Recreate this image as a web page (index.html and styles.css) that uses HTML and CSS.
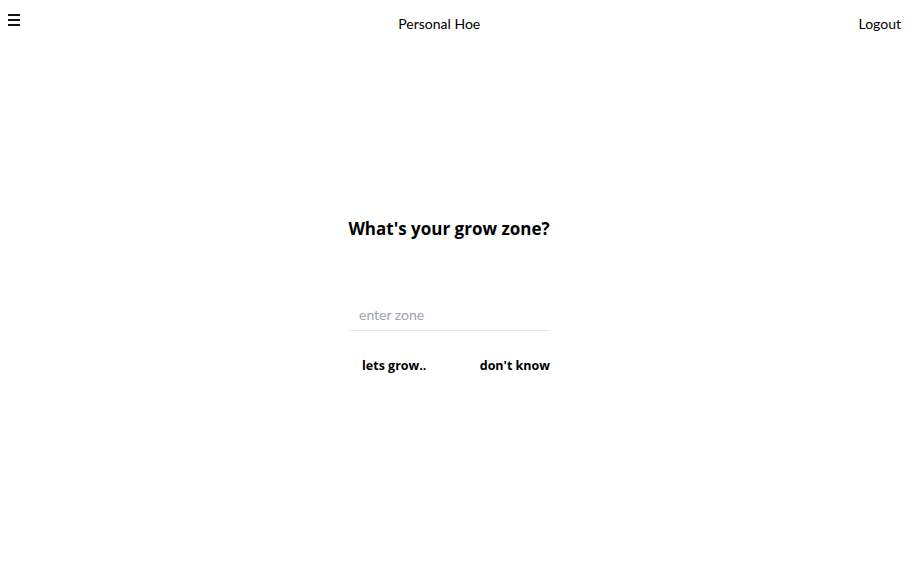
FILE: index.html
```
<!DOCTYPE html>
<html>
<head>
<meta charset="utf-8">
<link rel="stylesheet" href="styles.css">
</head>
<body>
<header class="topbar">
  <button class="menu" aria-label="menu">
    <svg width="12" height="12" viewBox="0 0 12 12"><rect x="0" y="0" width="12" height="2" fill="#111"/><rect x="0" y="5" width="12" height="2" fill="#111"/><rect x="0" y="10" width="12" height="2" fill="#111"/></svg>
  </button>
  <div class="title">Personal Hoe</div>
  <a class="logout" href="#">Logout</a>
</header>
<main class="main">
  <div class="panel">
    <h1 class="heading">What's your grow zone?</h1>
    <input class="zone" type="text" placeholder="enter zone">
    <div class="actions">
      <button class="btn">lets grow..</button>
      <button class="btn">don't know</button>
    </div>
  </div>
</main>
</body>
</html>
```
FILE: styles.css
```
* { box-sizing: border-box; }
body {
  margin: 0;
  font-family: "Lato", "Open Sans", sans-serif;
  color: #000;
  background: #fff;
}
.topbar {
  display: flex;
  justify-content: space-between;
  align-items: center;
  height: 46px;
  padding: 0 13px 0 8px;
  font-size: 14px;
}
.menu {
  border: 0;
  background: none;
  padding: 0;
  width: 12px;
  height: 12px;
  display: flex;
  margin-top: -6px;
}
.title { color: #000; }
.logout { color: #000; text-decoration: none; }
.main {
  display: flex;
  justify-content: center;
  padding-right: 16px;
  padding-top: 167px;
}
.panel {
  width: 202px;
  display: flex;
  flex-direction: column;
}
.heading {
  margin: 0;
  font-family: "Open Sans", sans-serif;
  font-size: 17px;
  font-weight: 700;
  text-align: center;
  line-height: 32px;
  white-space: nowrap;
  display: flex;
  justify-content: center;
}
.zone {
  margin-top: 54px;
  border: 0;
  border-bottom: 1px solid #e5e7eb;
  height: 32px;
  padding: 0 11px;
  font-family: inherit;
  font-size: 14px;
  outline: none;
}
.zone::placeholder { color: #9ca3af; }
.actions {
  display: flex;
  justify-content: space-between;
  padding-left: 14px;
  margin-top: 22px;
}
.btn {
  border: 0;
  background: none;
  padding: 0;
  font-family: "Open Sans", sans-serif;
  font-weight: 700;
  font-size: 12.5px;
  color: #000;
  line-height: 26px;
}
```
